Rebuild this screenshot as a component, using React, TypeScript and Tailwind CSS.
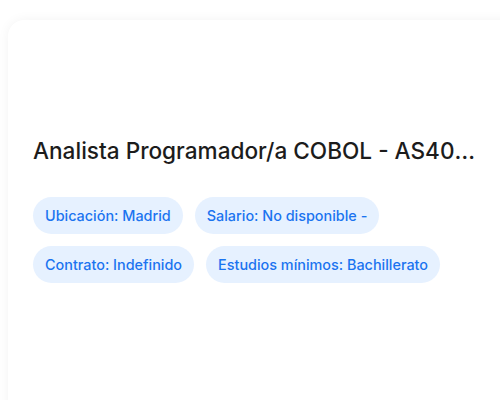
export default function App() {
  const tags = [
    "Ubicación: Madrid",
    "Salario: No disponible -",
    "Contrato: Indefinido",
    "Estudios mínimos: Bachillerato",
  ]
  return (
    <div className="w-[500px] h-[400px] overflow-hidden bg-white pt-5 pl-2" style={{ fontFamily: 'Inter, sans-serif' }}>
      <div className="w-[520px] h-[420px] rounded-2xl bg-white shadow-[0_0_12px_rgba(0,0,0,0.05)] pt-[115px] pl-[25px] pr-12">
        <h2 className="w-[443px] truncate text-[22.6px] font-medium text-[#1c1c1c] leading-8">
          Analista Programador/a COBOL - AS400 Madrid
        </h2>
        <div className="mt-[30px] flex flex-wrap gap-3 w-[443px]">
          {tags.map((t) => (
            <span key={t} className="rounded-full bg-[#e6f1ff] px-3 py-2 text-[14.4px] leading-[21px] font-medium text-[#1b74f0]">
              {t}
            </span>
          ))}
        </div>
      </div>
    </div>
  )
}
